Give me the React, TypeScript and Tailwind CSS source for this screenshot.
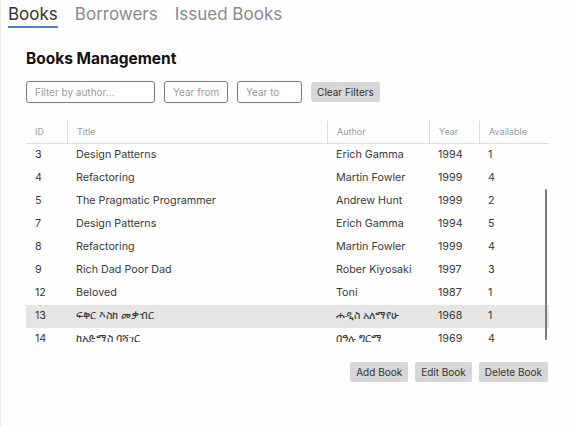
import React, { FC, useState } from "react";

interface IBook {
	id: number;
	title: string;
	author: string;
	year: number;
	available: number;
}

const books: IBook[] = [
	{ id: 3, title: "Design Patterns", author: "Erich Gamma", year: 1994, available: 1 },
	{ id: 4, title: "Refactoring", author: "Martin Fowler", year: 1999, available: 4 },
	{ id: 5, title: "The Pragmatic Programmer", author: "Andrew Hunt", year: 1999, available: 2 },
	{ id: 7, title: "Design Patterns", author: "Erich Gamma", year: 1994, available: 5 },
	{ id: 8, title: "Refactoring", author: "Martin Fowler", year: 1999, available: 4 },
	{ id: 9, title: "Rich Dad Poor Dad", author: "Rober Kiyosaki", year: 1997, available: 3 },
	{ id: 12, title: "Beloved", author: "Toni", year: 1987, available: 1 },
	{ id: 13, title: "ፍቅር እስከ መቃብር", author: "ሐዲስ አለማየሁ", year: 1968, available: 1 },
	{ id: 14, title: "ከአድማስ ባሻገር", author: "በዓሉ ግርማ", year: 1969, available: 4 },
];

const tabs = ["Books", "Borrowers", "Issued Books"];
const cols = "grid grid-cols-[41px_260px_102px_50px_70px]";

const App: FC = () => {
	const [active, setActive] = useState<string>("Books");
	const [selected, setSelected] = useState<number>(13);

	return (
		<div className="w-[575px] h-[426px] overflow-hidden bg-[#fefefe] border-l border-[#ebebe4] font-['Inter','DejaVu_Sans','Noto_Sans',sans-serif]">
			{/* tabs */}
			<nav className="flex gap-[17px] pl-[7px] pt-[2px]">
				{tabs.map((t) => (
					<button
						key={t}
						onClick={() => setActive(t)}
						className={
							t === active
								? "text-[17px] leading-[24px] text-[#333] border-b-2 border-[#4a80dc]"
								: "text-[17px] leading-[24px] text-[#8a8a8a] border-b-2 border-transparent"
						}
					>
						{t}
					</button>
				))}
			</nav>

			<section className="pl-[25px]">
				<h1 className="mt-[21px] text-[15.5px] leading-[20px] font-bold text-[#111]">Books Management</h1>

				{/* filters */}
				<div className="mt-[12px] flex items-center">
					<input
						placeholder="Filter by author..."
						className="w-[129px] h-[22px] px-[8px] text-[10px] border border-[#7a7a7a] rounded-[3px] bg-white placeholder:text-[#9a9a9a] outline-none"
					/>
					<input
						placeholder="Year from"
						className="ml-[9px] w-[64px] h-[22px] px-[8px] text-[10px] border border-[#7a7a7a] rounded-[3px] bg-white placeholder:text-[#9a9a9a] outline-none"
					/>
					<input
						placeholder="Year to"
						className="ml-[9px] w-[65px] h-[22px] px-[8px] text-[10px] border border-[#7a7a7a] rounded-[3px] bg-white placeholder:text-[#9a9a9a] outline-none"
					/>
					<button className="ml-[9px] w-[69px] h-[20px] text-[10px] text-[#333] bg-[#d6d6d6] rounded-[3px]">
						Clear Filters
					</button>
				</div>

				{/* table */}
				<div className="mt-[18px] w-[523px]">
					<div className={`${cols} h-[23px] items-stretch border-b border-[#dedede] text-[9px] text-[#9a9a9a]`}>
						<div className="pl-[9px] flex items-center">ID</div>
						<div className="pl-[9px] flex items-center border-l border-[#dedede]">Title</div>
						<div className="pl-[9px] flex items-center border-l border-[#dedede]">Author</div>
						<div className="pl-[9px] flex items-center border-l border-[#dedede]">Year</div>
						<div className="pl-[9px] flex items-center border-l border-[#dedede]">Available</div>
					</div>
					<div className="relative h-[203px] overflow-hidden">
						{books.map((b) => (
							<div
								key={b.id}
								onClick={() => setSelected(b.id)}
								className={`${cols} h-[23px] items-center text-[10.75px] text-[#3a3a3a] ${b.id === selected ? "bg-[#e6e5e5]" : ""}`}
							>
								<div className="pl-[9px]">{b.id}</div>
								<div className="pl-[9px]">{b.title}</div>
								<div className="pl-[9px]">{b.author}</div>
								<div className="pl-[9px]">{b.year}</div>
								<div className="pl-[9px]">{b.available}</div>
							</div>
						))}
						{/* scrollbar thumb */}
						<div className="absolute right-[2px] top-[45px] w-[2px] h-[151px] bg-[#7a7a7a] rounded-full" />
					</div>
				</div>

				{/* actions */}
				<div className="mt-[15px] w-[523px] flex justify-end gap-[7px] pr-[1px]">
					<button className="h-[20px] px-[6px] text-[10px] text-[#333] bg-[#d6d6d6] rounded-[2px]">Add Book</button>
					<button className="h-[20px] px-[6px] text-[10px] text-[#333] bg-[#d6d6d6] rounded-[2px]">Edit Book</button>
					<button className="h-[20px] px-[6px] text-[10px] text-[#333] bg-[#d6d6d6] rounded-[2px]">Delete Book</button>
				</div>
			</section>
		</div>
	);
};

export default App;
